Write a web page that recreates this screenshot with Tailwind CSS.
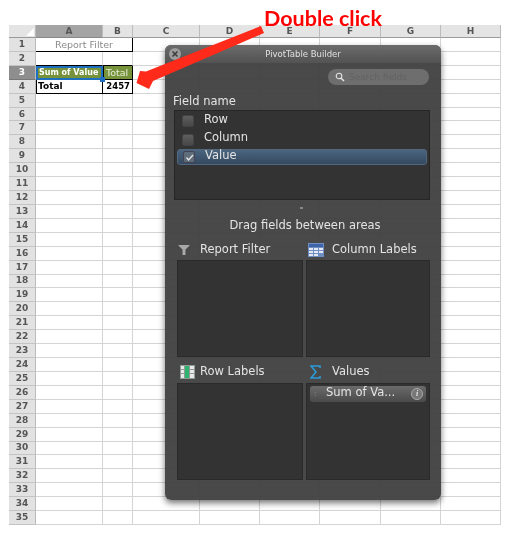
<!DOCTYPE html>
<html lang="en">
<head>
  <title>PivotTable Builder</title>
  <script src="https://cdn.jsdelivr.net/npm/@tailwindcss/browser@4"></script>
</head>
<body class="bg-white">
  <div class="relative w-[519px] h-[538px] overflow-hidden blur-[0.4px] font-['DejaVu_Sans',sans-serif]">

    <!-- worksheet -->
    <div class="pt-[25px] pl-[9px]">
      <div id="sheet" class="grid grid-cols-[27px_67px_30px_67px_60px_60px_61px_60px_60px] grid-rows-[13px_repeat(35,1fr)] w-[492px] h-[500px] text-[9px] leading-none">
        <div class="bg-[#e4e4e4] border-b border-b-[#9a9a9a] border-r border-r-[#bbb] flex justify-end items-end"><div class="w-0 h-0 border-l-[8px] border-l-transparent border-b-[8px] border-b-white mr-px mb-px"></div></div>
        <div class="bg-[#a4a4a4] border-b border-b-[#888] border-r border-r-[#bbb] flex items-center justify-center font-bold text-[#555]">A</div>
        <div class="bg-[#e4e4e4] border-b border-b-[#9a9a9a] border-r border-r-[#bbb] flex items-center justify-center font-bold text-[#555]">B</div>
        <div class="bg-[#e4e4e4] border-b border-b-[#9a9a9a] border-r border-r-[#bbb] flex items-center justify-center font-bold text-[#555]">C</div>
        <div class="bg-[#e4e4e4] border-b border-b-[#9a9a9a] border-r border-r-[#bbb] flex items-center justify-center font-bold text-[#555]">D</div>
        <div class="bg-[#e4e4e4] border-b border-b-[#9a9a9a] border-r border-r-[#bbb] flex items-center justify-center font-bold text-[#555]">E</div>
        <div class="bg-[#e4e4e4] border-b border-b-[#9a9a9a] border-r border-r-[#bbb] flex items-center justify-center font-bold text-[#555]">F</div>
        <div class="bg-[#e4e4e4] border-b border-b-[#9a9a9a] border-r border-r-[#bbb] flex items-center justify-center font-bold text-[#555]">G</div>
        <div class="bg-[#e4e4e4] border-b border-b-[#9a9a9a] border-r border-r-[#bbb] flex items-center justify-center font-bold text-[#555]">H</div>
      </div>
    </div>

    <!-- pivot builder panel -->
    <div class="absolute left-[165px] top-[45px] w-[276px] h-[455px] rounded-[6px] bg-[#3f3f3f]/95 shadow-[0_3px_6px_rgba(0,0,0,0.55)] text-[#e4e4e4] text-[11.5px] leading-none">
      <div class="relative h-[18px] rounded-t-[6px] bg-gradient-to-b from-[#6c6c6c] to-[#535353]/95 flex items-center justify-center text-[8.5px] text-[#e0e0e0]">
        <div class="absolute left-[4px] top-[3px] w-[12px] h-[12px] rounded-full bg-[#9c9c9c] flex items-center justify-center">
          <svg width="8" height="8" viewBox="0 0 8 8"><path d="M1.5 1.5 6.5 6.5M6.5 1.5 1.5 6.5" stroke="#3c3c3c" stroke-width="1.6"/></svg>
        </div>
        PivotTable Builder
      </div>

      <div class="flex justify-end mt-[6px] pr-[12px]">
        <div class="w-[101px] h-[16px] rounded-full bg-[#6e6e6e] flex items-center pl-[7px] gap-[4px] text-[9px] text-[#626262]">
          <svg width="10" height="10" viewBox="0 0 10 10" fill="none" stroke="#e4e4e4" stroke-width="1.1"><circle cx="4" cy="4" r="2.8"/><path d="M6 6 9 9" stroke-width="1.5"/></svg>
          <span>Search fields</span>
        </div>
      </div>

      <div class="mt-[11px] pl-[8px] h-[12px] flex items-center font-medium">Field name</div>

      <div class="mt-[2px] ml-[9px] w-[256px] h-[90px] bg-[#333]/95 border border-[#262626] pt-[1px] px-[2px]">
        <div class="h-[18px] flex items-center pl-[5px]">
          <span class="w-[12px] h-[12px] rounded-[2px] bg-gradient-to-b from-[#5e5e5e] to-[#484848] border border-[#444]"></span>
          <span class="ml-[10px] mb-[3px]">Row</span>
        </div>
        <div class="h-[19px] flex items-center pl-[5px]">
          <span class="w-[12px] h-[12px] rounded-[2px] bg-gradient-to-b from-[#5e5e5e] to-[#484848] border border-[#444]"></span>
          <span class="ml-[10px] mb-[3px]">Column</span>
        </div>
        <div class="h-[16px] flex items-center pl-[5px] rounded-[3px] bg-gradient-to-b from-[#4b6580] to-[#34495f] border border-[#50677e]">
          <span class="w-[12px] h-[12px] rounded-[2px] bg-[#5f6c7a] border border-[#445] flex items-center justify-center">
            <svg width="9" height="9" viewBox="0 0 9 9" fill="none"><path d="M1.5 4.5 3.5 7 8 2" stroke="#e8e8e8" stroke-width="1.3"/></svg>
          </span>
          <span class="ml-[10px] mb-[2px]">Value</span>
        </div>
      </div>

      <div class="mt-[7px] flex justify-center"><span class="w-[3px] h-[2px] bg-[#888] ml-[-4px]"></span></div>

      <div class="mt-[11px] pl-[4px] text-center h-[12px] font-medium">Drag fields between areas</div>

      <div class="mt-[9px] ml-[12px] grid grid-cols-[126px_124px] gap-x-[3px]">
        <div class="h-[19px] flex items-center pb-[2px]">
          <svg class="ml-[1px]" width="12" height="10" viewBox="0 0 12 10"><path d="M0 0H12L7.5 4.5V10H4.5V4.5Z" fill="#a8a8a8"/></svg>
          <span class="ml-[10px]">Report Filter</span>
        </div>
        <div class="h-[19px] flex items-center pb-[2px]">
          <svg class="ml-[2px]" width="16" height="14" viewBox="0 0 16 14"><rect width="16" height="14" fill="#6f8fc4"/><rect x="1" y="1" width="14" height="3" fill="#3f64a8"/><path d="M1 5H5V7H1ZM6 5H10V7H6ZM11 5H15V7H11ZM1 8H5V10H1ZM6 8H10V10H6ZM11 8H15V10H11ZM1 11H5V13H1ZM6 11H10V13H6Z" fill="#e4e9f3"/></svg>
          <span class="ml-[8px]">Column Labels</span>
        </div>
        <div class="h-[97px] bg-[#333]/95 border border-[#2a2a2a]"></div>
        <div class="h-[97px] bg-[#333]/95 border border-[#2a2a2a]"></div>
        <div class="h-[26px] pt-[4px] flex items-center">
          <svg class="ml-[3px]" width="15" height="14" viewBox="0 0 15 14"><rect width="15" height="14" fill="#8f9a96"/><path d="M1 1H4V4H1ZM1 5H4V8H1ZM1 9H4V13H1ZM10 1H14V4H10ZM10 5H14V8H10ZM10 9H14V13H10Z" fill="#e8e8e8"/><rect x="5" y="1" width="4" height="12" fill="#2fb36f"/></svg>
          <span class="ml-[5px]">Row Labels</span>
        </div>
        <div class="h-[26px] pt-[4px] flex items-center">
          <svg class="ml-[4px]" width="11" height="14" viewBox="0 0 11 14" fill="none"><path d="M10 3V1H1L6 7 1 13H10V11" stroke="#2a9bd8" stroke-width="1.6"/></svg>
          <span class="ml-[11px]">Values</span>
        </div>
        <div class="h-[97px] bg-[#333]/95 border border-[#2a2a2a]"></div>
        <div class="h-[97px] bg-[#333]/95 border border-[#2a2a2a] pt-[2px] px-[3px]">
          <div class="h-[16px] rounded-[3px] bg-gradient-to-b from-[#6b6b6b] to-[#4a4a4a] flex items-center pl-[4px] pr-[3px]">
            <span class="text-[7px] text-[#aaa] w-[8px]">:</span>
            <span class="ml-[4px] mb-[2px]">Sum of Va...</span>
            <span class="ml-auto w-[12px] h-[12px] rounded-full border border-[#aaa] bg-[#777] flex items-center justify-center text-[8px] italic font-bold font-['Liberation_Serif',serif]">i</span>
          </div>
        </div>
      </div>
    </div>

    <!-- callout -->
    <svg class="absolute left-0 top-0" width="519" height="140" viewBox="0 0 519 140">
      <path d="M261 26 264 33 153 81 149 89 136.5 83 140 71 146 71.5Z" fill="#ff2a1a"/>
    </svg>
    <div class="absolute left-[264px] top-[6px] font-['Lato',sans-serif] font-bold text-[21.5px] leading-[24px] text-[#ff0000]">Double click</div>
  </div>

  <script>
    // body rows of the sheet, the few filled cells are special-cased
    var sheet = document.getElementById('sheet');
    var cell = 'border-b border-b-[#d4d4d4] border-r border-r-[#d4d4d4]';
    var html = '';
    for (var r = 1; r <= 35; r++) {
      var head = r === 3
        ? 'bg-[#8e8e8e] text-white border-b border-b-[#777] border-r border-r-[#bbb] flex items-center justify-center font-bold'
        : 'bg-[#e2e2e2] text-[#555] border-b border-b-[#c4c4c4] border-r border-r-[#bbb] flex items-center justify-center font-bold';
      html += '<div class="' + head + '">' + r + '</div>';
      if (r === 1) {
        html += '<div class="col-span-2 border-b border-b-black border-r border-r-black flex items-center justify-center text-[#8a8a8a] text-[9.5px]">Report Filter</div>';
      } else if (r === 2) {
        html += '<div class="border-b border-b-black border-r border-r-[#d4d4d4]"></div><div class="border-b border-b-black border-r border-r-[#d4d4d4]"></div>';
      } else if (r === 3) {
        html += '<div class="relative bg-[#76933c] border-2 border-[#1f6fc0] flex items-center pl-[1px] text-white font-bold whitespace-nowrap text-[8px]">Sum of Value<span class="absolute right-[-4px] bottom-[-4px] w-[5px] h-[5px] bg-[#1f6fc0]"></span></div>';
        html += '<div class="bg-[#76933c] border-b border-b-black border-r border-r-black border-l border-l-black flex items-center pl-[2px] text-[#e6eed6] text-[9.5px]">Total</div>';
      } else if (r === 4) {
        html += '<div class="border-b border-b-black border-r border-r-black border-l border-l-black flex items-center pl-[1px] font-bold text-black">Total</div>';
        html += '<div class="border-b border-b-black border-r border-r-black flex items-center justify-end pr-[2px] font-bold text-black text-[8.5px]">2457</div>';
      } else {
        html += '<div class="' + cell + '"></div><div class="' + cell + '"></div>';
      }
      for (var c = 0; c < 6; c++) html += '<div class="' + cell + '"></div>';
    }
    sheet.insertAdjacentHTML('beforeend', html);
  </script>
</body>
</html>
